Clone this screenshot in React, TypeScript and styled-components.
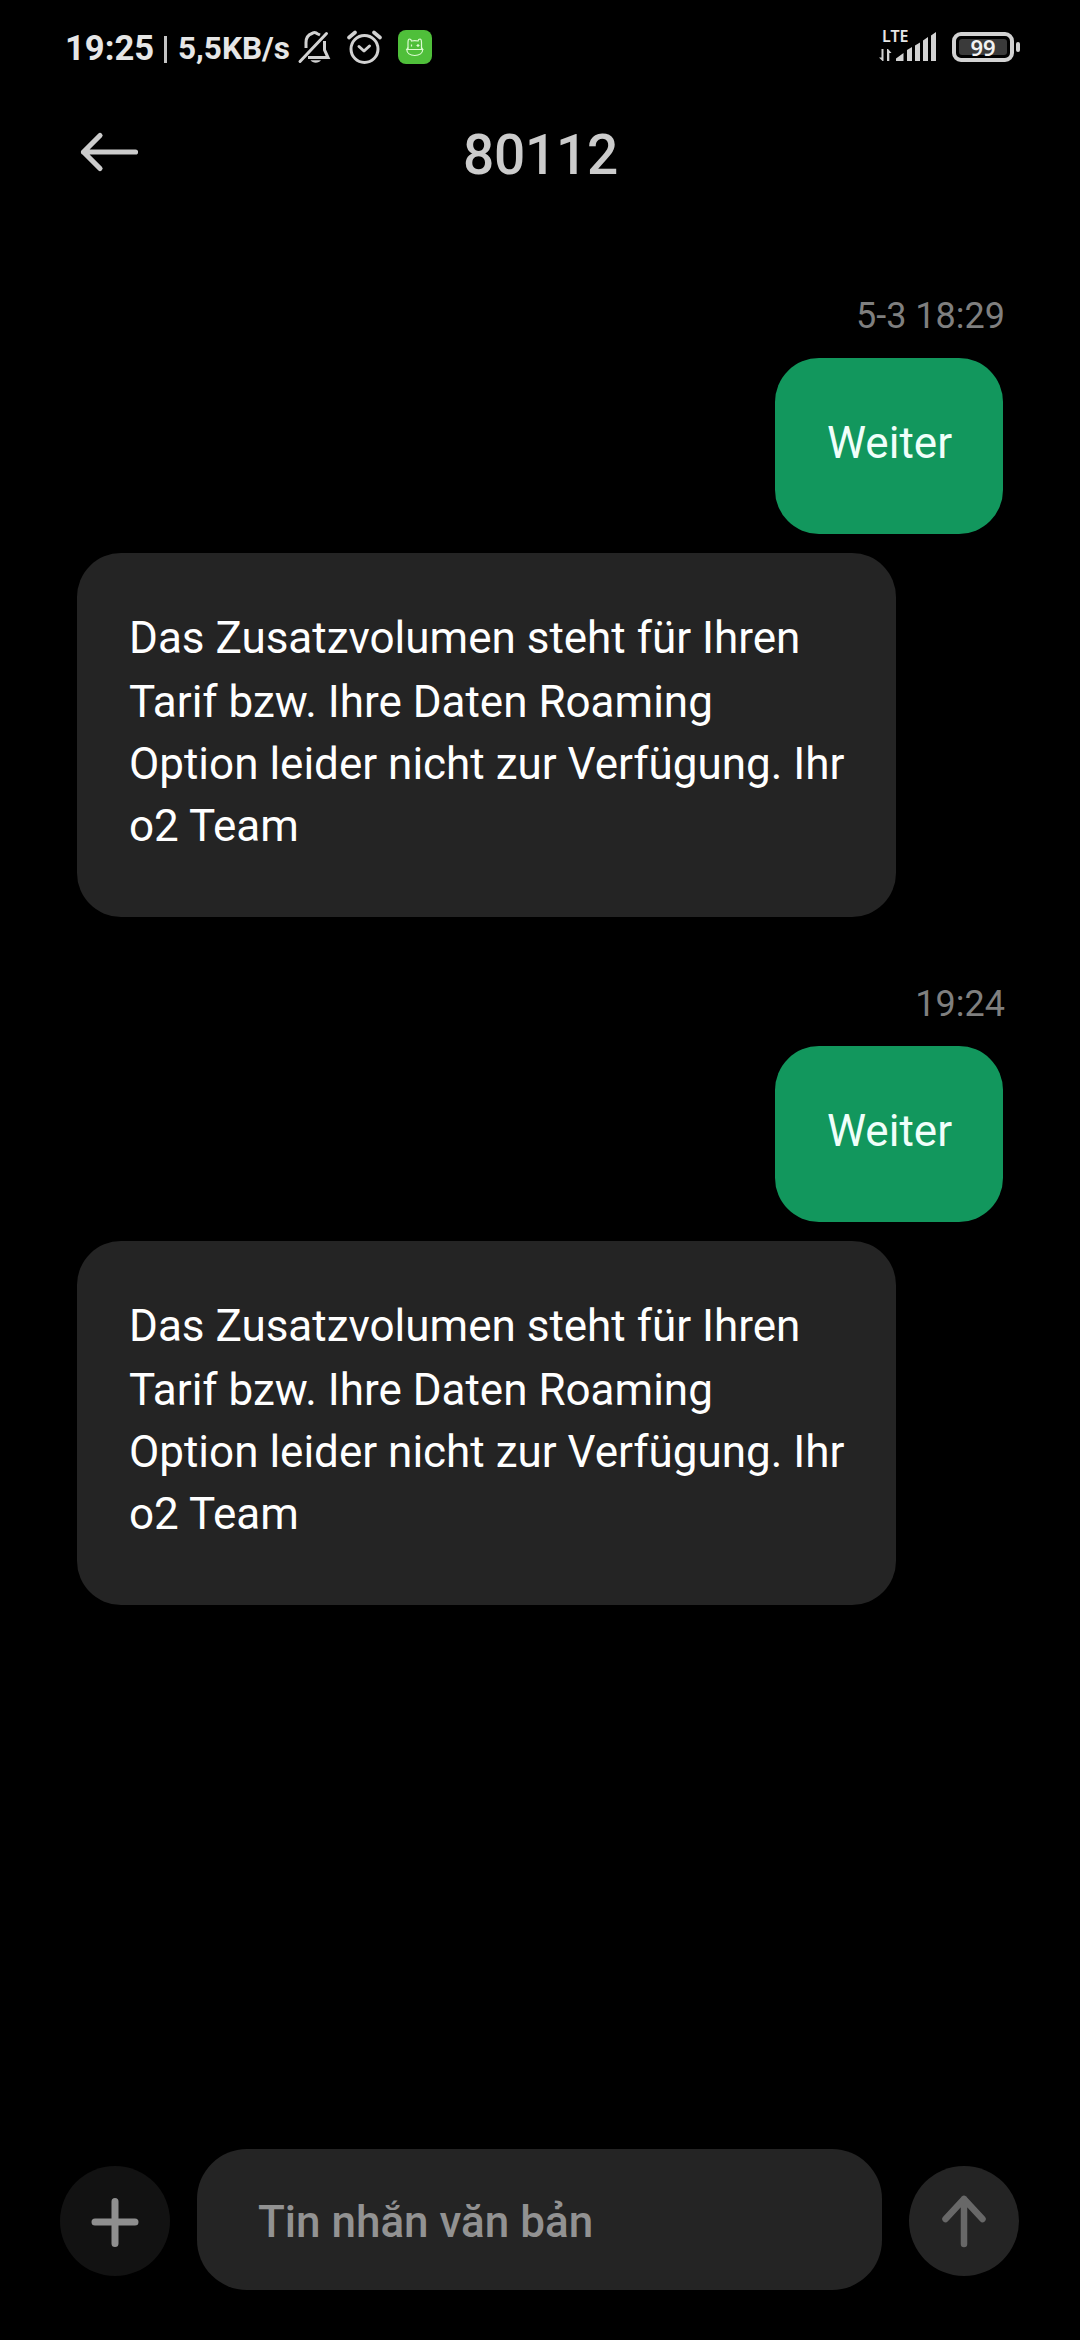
import React from "react";
import styled, { createGlobalStyle } from "styled-components";

const GlobalStyle = createGlobalStyle`
  * { box-sizing: border-box; }
  body { margin: 0; background: #000; }
`;

const Screen = styled.div`
  width: 1080px;
  height: 2340px;
  display: flex;
  flex-direction: column;
  background: #000;
  font-family: Roboto, "Noto Sans", sans-serif;
  overflow: hidden;
`;

const StatusBar = styled.header`
  height: 96px;
  padding: 0 60px 0 65px;
  display: flex;
  justify-content: space-between;
  align-items: flex-start;
  color: #e6e6e6;
`;

const StatusGroup = styled.div`
  display: flex;
  align-items: flex-start;
`;

const Clock = styled.span`
  width: 96px;
  padding-top: 28px;
  font-size: 34.6px;
  line-height: 40px;
  font-weight: 700;
  white-space: nowrap;
`;

const Divider = styled.span`
  width: 3px;
  height: 27px;
  margin: 36px 11px 0 3px;
  background: #c4c4c4;
`;

const Speed = styled.span`
  width: 120px;
  padding-top: 28px;
  font-size: 31.5px;
  line-height: 42px;
  font-weight: 700;
  white-space: nowrap;
`;

const StatusIcon = styled.svg<{ $gap?: number }>`
  display: block;
  flex: none;
  margin-top: 28px;
  margin-left: ${(p) => p.$gap ?? 0}px;
`;

const Network = styled.div`
  width: 60px;
  margin-right: 13px;
  padding-top: 29px;
  display: flex;
  flex-direction: column;
  font-family: "Noto Sans", sans-serif;
  position: relative;
`;

const NetworkType = styled.span`
  padding-left: 3px;
  font-size: 16px;
  line-height: 15px;
  font-weight: 600;
`;

const Bars = styled.svg`
  position: absolute;
  left: 0;
  top: 30px;
`;

const Battery = styled.div`
  width: 62px;
  height: 30px;
  margin-top: 32px;
  padding: 3px;
  border: 4px solid #d2d2d2;
  border-radius: 9px;
  display: flex;
`;

const Charge = styled.div`
  flex: 1;
  display: flex;
  align-items: center;
  justify-content: center;
  border-radius: 3px;
  background: #3a3a3a;
  color: #f2f2f2;
  font: 600 22px/16px "Noto Sans", sans-serif;
`;

const Terminal = styled.div`
  width: 4px;
  height: 10px;
  margin: 42px 0 0 2px;
  border-radius: 2px;
  background: #d2d2d2;
`;

const TitleBar = styled.div`
  height: 196px;
  padding: 27px 77px 0 78px;
  display: grid;
  grid-template-columns: 64px 1fr 64px;
  align-items: start;
`;

const BackButton = styled.button`
  padding: 5px 0 0;
  border: 0;
  background: none;
  line-height: 0;
  text-align: left;
`;

const Title = styled.h1`
  margin: 0;
  text-align: center;
  color: #cccccc;
  font-size: 55px;
  line-height: 64px;
  font-weight: 500;
  letter-spacing: -0.3px;
`;

const Thread = styled.main`
  flex: 1;
  padding: 0 77px;
  display: flex;
  flex-direction: column;
`;

const Exchange = styled.section`
  height: 688px;
  display: flex;
  flex-direction: column;
  align-items: flex-start;
`;

const Stamp = styled.time`
  align-self: flex-end;
  height: 66px;
  padding-top: 3px;
  margin-right: -2px;
  color: #7f7f7f;
  font-size: 36px;
  line-height: 42px;
`;

const Bubble = styled.div<{ $sent?: boolean }>`
  align-self: ${(p) => (p.$sent ? "flex-end" : "flex-start")};
  width: ${(p) => (p.$sent ? 228 : 819)}px;
  height: ${(p) => (p.$sent ? 176 : 364)}px;
  margin-bottom: 19px;
  padding: 52px 0 0 52px;
  border-radius: 44px;
  background: ${(p) => (p.$sent ? "#12975d" : "#242424")};
  color: ${(p) => (p.$sent ? "#f0fffa" : "#ffffff")};
`;

const BubbleLine = styled.span<{ $first?: boolean }>`
  display: block;
  font-size: 44px;
  line-height: 62px;
  padding: ${(p) => (p.$first ? "2px 0" : "0")};
  white-space: nowrap;
`;

const Composer = styled.footer`
  height: 191px;
  padding: 0 61px 0 60px;
  display: flex;
  align-items: flex-start;
  gap: 27px;
`;

const RoundButton = styled.button<{ $bg: string }>`
  flex: none;
  width: 110px;
  height: 110px;
  margin-top: 17px;
  padding: 0;
  border: 0;
  border-radius: 50%;
  background: ${(p) => p.$bg};
  line-height: 0;
`;

const Field = styled.div`
  flex: 1;
  height: 141px;
  padding: 47px 0 0 61px;
  border-radius: 50px;
  background: #242424;
  color: #929292;
  font-size: 44px;
  line-height: 52px;
  font-weight: 500;
`;

const reply = [
  "Das Zusatzvolumen steht für Ihren",
  "Tarif bzw. Ihre Daten Roaming",
  "Option leider nicht zur Verfügung. Ihr",
  "o2 Team",
];

const exchanges = [
  { time: "5-3 18:29", sent: ["Weiter"], received: reply },
  { time: "19:24", sent: ["Weiter"], received: reply },
];

const Message = ({ lines, sent }: { lines: string[]; sent?: boolean }) => (
  <Bubble $sent={sent}>
    {lines.map((line, i) => (
      <BubbleLine key={line} $first={i === 0}>
        {line}
      </BubbleLine>
    ))}
  </Bubble>
);

const BellOff = () => (
  <StatusIcon width="34" height="38" viewBox="0 0 34 38" fill="none" stroke="#d2d2d2" strokeWidth="3" $gap={-1}>
    <path d="M9 20V14.500C9 9.500 11.500 6.700 15 5.500C16 4.200 19 4.200 20 5.500L23 7" />
    <path d="M27.500 13V22L31 29.500H11" />
    <path d="M3 33.500L29.500 5.500" strokeLinecap="round" />
    <path d="M13.500 32.300H24C22 35.500 15.500 35.500 13.500 32.300Z" fill="#d2d2d2" stroke="none" />
  </StatusIcon>
);

const Alarm = () => (
  <StatusIcon width="36" height="38" viewBox="0 0 36 38" fill="none" stroke="#d2d2d2" strokeWidth="3" $gap={15}>
    <circle cx="18.500" cy="21" r="13.500" />
    <path d="M3 9.500L9 4.500M28 4.500L34 9.500" strokeWidth="3.600" strokeLinecap="round" />
    <path d="M13 18.500L18 23L23.500 18" strokeLinecap="round" strokeLinejoin="round" />
  </StatusIcon>
);

const AppBadge = () => (
  <StatusIcon width="36" height="38" viewBox="0 0 36 38" fill="none" $gap={15}>
    <rect x="1" y="2" width="34" height="34" rx="8" fill="#4fbf3a" />
    <g stroke="#dcfbd2" strokeWidth="1.200">
      <path d="M11 21.500V14.500C11 12.500 11.500 11 12.500 11C13.500 11 14.300 12 14.500 13C16.500 12.500 19 12.500 21 13C21.200 12 22 11 23 11C24 11 24.500 12.500 24.500 14.500V21.500" />
      <path d="M11 19.500L9.800 21.500H25.700L24.500 19.500" />
      <path d="M9.800 21.500C9.800 25 13 27.500 17.700 27.500C22.500 27.500 25.700 25 25.700 21.500" />
      <path d="M14.500 16.500V18.500M19.500 17.500H22.500M21 16V19" />
    </g>
  </StatusIcon>
);

export default function App() {
  return (
    <>
      <GlobalStyle />
      <Screen>
        <StatusBar>
          <StatusGroup>
            <Clock>19:25</Clock>
            <Divider />
            <Speed>5,5KB/s</Speed>
            <BellOff />
            <Alarm />
            <AppBadge />
          </StatusGroup>
          <StatusGroup>
            <Network>
              <NetworkType>LTE</NetworkType>
              <Bars width="60" height="32" viewBox="0 0 60 32" fill="#d2d2d2">
                <path d="M2.500 19H4.500V31H3.500L0 27.500H2.500ZM8 31V19H9L12.500 23H10.300V31Z" />
                <path d="M17 31V28.500L24.500 23V31ZM28 31V20L33 17V31ZM36 31V15.500L41 12.500V31ZM44 31V10.500L49 7V31ZM52 31V5.500L57 2V31Z" />
              </Bars>
            </Network>
            <Battery>
              <Charge>99</Charge>
            </Battery>
            <Terminal />
          </StatusGroup>
        </StatusBar>
        <TitleBar>
          <BackButton aria-label="Back">
            <svg width="64" height="48" viewBox="0 0 64 48" fill="none" stroke="#cccccc" strokeWidth="5.200" strokeLinecap="round" strokeLinejoin="round">
              <path d="M57.500 24H5.500M22 7.500L5.500 24L22 40.500" />
            </svg>
          </BackButton>
          <Title>80112</Title>
        </TitleBar>
        <Thread>
          {exchanges.map((e) => (
            <Exchange key={e.time}>
              <Stamp>{e.time}</Stamp>
              <Message sent lines={e.sent} />
              <Message lines={e.received} />
            </Exchange>
          ))}
        </Thread>
        <Composer>
          <RoundButton $bg="#121212" aria-label="Add">
            <svg width="110" height="110" viewBox="0 0 110 110" stroke="#8f8f8f" strokeWidth="7" strokeLinecap="round">
              <path d="M55 35.500V77.500M35 56H75" />
            </svg>
          </RoundButton>
          <Field>Tin nhắn văn bản</Field>
          <RoundButton $bg="#242424" aria-label="Send">
            <svg width="110" height="110" viewBox="0 0 110 110" fill="none" stroke="#686868" strokeWidth="6.500" strokeLinecap="round" strokeLinejoin="round">
              <path d="M55 78V33M36.500 53L55 33L73.500 53" />
            </svg>
          </RoundButton>
        </Composer>
      </Screen>
    </>
  );
}
